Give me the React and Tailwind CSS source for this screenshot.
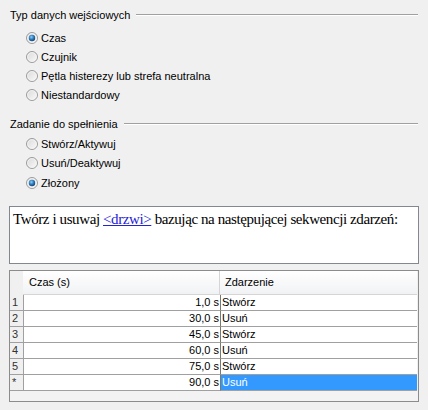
import React from 'react';

const ui = { fontFamily: '"Liberation Sans", Arial, sans-serif' };

function Radio({ checked }) {
  return (
    <svg width="12" height="12" viewBox="0 0 12 12" className="shrink-0">
      <defs>
        <linearGradient id="rfill" x1="0" y1="0" x2="1" y2="1">
          <stop offset="0" stopColor="#d8d8d8" />
          <stop offset="1" stopColor="#fbfbfb" />
        </linearGradient>
        <radialGradient id="rdot" cx="0.4" cy="0.35" r="0.7">
          <stop offset="0" stopColor="#8fd0f5" />
          <stop offset="0.5" stopColor="#2f7fc0" />
          <stop offset="1" stopColor="#123d6c" />
        </radialGradient>
      </defs>
      <circle cx="6" cy="6" r="5.5" fill="url(#rfill)" stroke="#9c9c9c" strokeWidth="1" />
      <circle cx="6" cy="6" r="4.3" fill="none" stroke="#f4f4f4" strokeWidth="0.8" />
      {checked && <circle cx="6" cy="6" r="3.2" fill="url(#rdot)" />}
    </svg>
  );
}

function GroupHeader({ title }) {
  return (
    <div className="flex items-center h-[14px] pl-[10px] pr-[10px]">
      <span className="text-[11px] leading-[14px] text-black whitespace-nowrap">{title}</span>
      <div className="flex-1 ml-[6px] border-t border-t-[#a0a0a0] border-b border-b-white" />
    </div>
  );
}

function RadioRow({ label, checked, h = 'h-[19px]' }) {
  return (
    <div className={`flex items-center ${h} pl-[26px] gap-[3px]`}>
      <Radio checked={checked} />
      <span className="text-[11px] leading-[14px] text-black">{label}</span>
    </div>
  );
}

const rows = [
  { n: '1', t: '1,0 s', e: 'Stwórz' },
  { n: '2', t: '30,0 s', e: 'Usuń' },
  { n: '3', t: '45,0 s', e: 'Stwórz' },
  { n: '4', t: '60,0 s', e: 'Usuń' },
  { n: '5', t: '75,0 s', e: 'Stwórz' },
  { n: '*', t: '90,0 s', e: 'Usuń', sel: true },
];

export default function App() {
  return (
    <div className="w-[428px] h-[410px] bg-[#f0f0f0] overflow-hidden pt-[8px]" style={ui}>
      <GroupHeader title="Typ danych wejściowych" />
      <div className="mt-[6px]">
        <RadioRow label="Czas" checked />
        <RadioRow label="Czujnik" />
        <RadioRow label="Pętla histerezy lub strefa neutralna" />
        <RadioRow label="Niestandardowy" />
      </div>

      <div className="mt-[13px]">
        <GroupHeader title="Zadanie do spełnienia" />
      </div>
      <div className="mt-[3px]">
        <RadioRow label="Stwórz/Aktywuj" h="h-[19.5px]" />
        <RadioRow label="Usuń/Deaktywuj" h="h-[19.5px]" />
        <RadioRow label="Złożony" checked h="h-[19.5px]" />
      </div>

      <div
        className="ml-[9px] mt-[13px] w-[410px] h-[58px] bg-white border border-[#828790] pt-[3px] pl-[3px] text-[15px] leading-[18px] tracking-[-0.4px] text-black whitespace-nowrap"
        style={{ fontFamily: '"Liberation Serif", "Times New Roman", serif' }}
      >
        Twórz i usuwaj <span className="text-[#2323d6] underline">&lt;drzwi&gt;</span> bazując na następującej sekwencji zdarzeń:
      </div>

      <div className="ml-[9px] mt-[6px] w-[410px] h-[132px] border border-[#8c8c8c] bg-[#f0f0f0] flex flex-col text-[11px] leading-[14px] text-black">
        <div className="flex h-[24px] shrink-0">
          <div className="w-[13px] bg-[#f0f0f0]" />
          <div className="w-[197px] flex items-center pl-[6px] bg-gradient-to-b from-white to-[#f1f2f4] border-r border-r-[#d5d5d5] border-b border-b-[#d5d5d5]">
            Czas (s)
          </div>
          <div className="flex-1 flex items-center pl-[5px] bg-gradient-to-b from-white to-[#f1f2f4] border-b border-b-[#d5d5d5] mr-[1px]">
            Zdarzenie
          </div>
        </div>
        {rows.map((r) => (
          <div key={r.n} className="flex h-[16px] shrink-0">
            <div className="w-[13px] pl-[2px] border-b border-b-[#a0a0a0] bg-[#f0f0f0] leading-[15px] text-[#333]">
              {r.n}
            </div>
            <div className="w-[198px] bg-white border-l border-l-[#a0a0a0] border-r border-r-[#7a7a6a] border-b border-b-[#a0a0a0] text-right pr-[1px] leading-[15px]">
              {r.t}
            </div>
            <div
              className={`flex-1 mr-[1px] border-b border-b-[#a0a0a0] pl-[1px] leading-[15px] ${
                r.sel ? 'bg-[#3399ff] text-white' : 'bg-white'
              }`}
            >
              {r.e}
            </div>
          </div>
        ))}
        <div className="flex-1 bg-[#f4f3f3]" />
      </div>
    </div>
  );
}
